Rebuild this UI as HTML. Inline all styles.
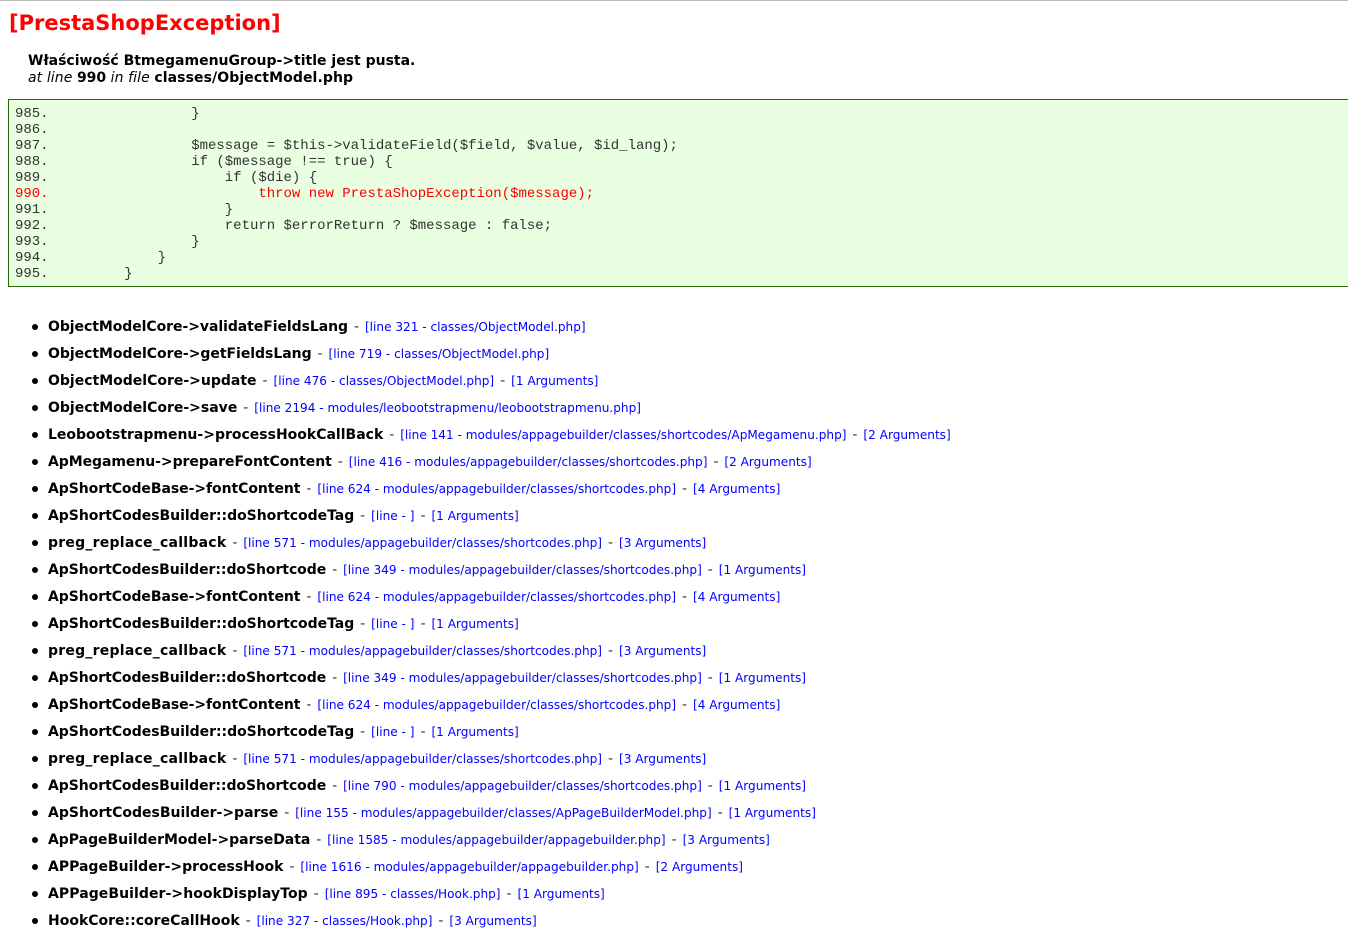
<!DOCTYPE html>
<html lang="pl"><head><meta charset="utf-8"><title>PrestaShopException</title>
<style>
html,body{margin:0;padding:0;background:#fff;overflow:hidden}
body{width:1348px;height:942px;position:relative;font-family:"DejaVu Sans","Liberation Sans",sans-serif;color:#000}
#top{position:absolute;left:0;top:0;width:1348px;height:1px;background:#bbb}
h2{position:absolute;left:9px;top:8px;margin:0;font-size:21px;line-height:30px;color:#f00;font-weight:bold;white-space:nowrap}
#msg{position:absolute;left:28px;top:53px;font-size:14px;line-height:17px;white-space:nowrap}
#msg i{letter-spacing:.1px}
#msg .f{letter-spacing:.1px}
#code{position:absolute;left:8px;top:99px;width:1345px;height:186px;border:1px solid #236B04;background:#EAFEE1;box-sizing:content-box}
#code pre{margin:6px 0 0 6px;font:14px/16px "Liberation Mono",monospace;color:#333;letter-spacing:-.01px}
#code .r{color:#f00}
ul{position:absolute;left:0;top:314px;margin:0;padding:0;list-style:none}
li{position:relative;height:27px;line-height:27px;padding-left:48px;white-space:nowrap;font-size:14px;word-spacing:1.5px;color:#333}
li:before{content:"";position:absolute;left:32px;top:10px;width:6px;height:6px;border-radius:50%;background:#000}
li b{font-size:14px;color:#000;word-spacing:0}
li b.s1{letter-spacing:-.06px}
li b.s2{letter-spacing:-.03px}
li b.p1{letter-spacing:.07px}
li b.p2{letter-spacing:.24px}
a{color:#00f;text-decoration:none;font-size:12.1px;word-spacing:0}
</style></head><body>
<div id="top"></div>
<h2>[PrestaShopException]</h2>
<div id="msg"><b>Właściwość BtmegamenuGroup-&gt;title jest pusta.</b><br><i>at line</i> <b>990</b> <i>in file</i> <b class="f">classes/ObjectModel.php</b></div>
<div id="code"><pre>985.                 }
986.
987.                 $message = $this-&gt;validateField($field, $value, $id_lang);
988.                 if ($message !== true) {
989.                     if ($die) {
<span class="r">990.                         throw new PrestaShopException($message);</span>
991.                     }
992.                     return $errorReturn ? $message : false;
993.                 }
994.             }
995.         }</pre></div>
<ul>
<li><b class="s1">ObjectModelCore-&gt;validateFieldsLang</b> - <a href="#">[line 321 - classes/ObjectModel.php]</a></li>
<li><b class="s2">ObjectModelCore-&gt;getFieldsLang</b> - <a href="#">[line 719 - classes/ObjectModel.php]</a></li>
<li><b>ObjectModelCore-&gt;update</b> - <a href="#">[line 476 - classes/ObjectModel.php]</a> - <a href="#">[1 Arguments]</a></li>
<li><b>ObjectModelCore-&gt;save</b> - <a href="#">[line 2194 - modules/leobootstrapmenu/leobootstrapmenu.php]</a></li>
<li><b>Leobootstrapmenu-&gt;processHookCallBack</b> - <a href="#">[line 141 - modules/appagebuilder/classes/shortcodes/ApMegamenu.php]</a> - <a href="#">[2 Arguments]</a></li>
<li><b class="s1">ApMegamenu-&gt;prepareFontContent</b> - <a href="#">[line 416 - modules/appagebuilder/classes/shortcodes.php]</a> - <a href="#">[2 Arguments]</a></li>
<li><b class="s1">ApShortCodeBase-&gt;fontContent</b> - <a href="#">[line 624 - modules/appagebuilder/classes/shortcodes.php]</a> - <a href="#">[4 Arguments]</a></li>
<li><b class="s2">ApShortCodesBuilder::doShortcodeTag</b> - <a href="#">[line - ]</a> - <a href="#">[1 Arguments]</a></li>
<li><b class="p2">preg_replace_callback</b> - <a href="#">[line 571 - modules/appagebuilder/classes/shortcodes.php]</a> - <a href="#">[3 Arguments]</a></li>
<li><b class="s1">ApShortCodesBuilder::doShortcode</b> - <a href="#">[line 349 - modules/appagebuilder/classes/shortcodes.php]</a> - <a href="#">[1 Arguments]</a></li>
<li><b class="s1">ApShortCodeBase-&gt;fontContent</b> - <a href="#">[line 624 - modules/appagebuilder/classes/shortcodes.php]</a> - <a href="#">[4 Arguments]</a></li>
<li><b class="s2">ApShortCodesBuilder::doShortcodeTag</b> - <a href="#">[line - ]</a> - <a href="#">[1 Arguments]</a></li>
<li><b class="p2">preg_replace_callback</b> - <a href="#">[line 571 - modules/appagebuilder/classes/shortcodes.php]</a> - <a href="#">[3 Arguments]</a></li>
<li><b class="s1">ApShortCodesBuilder::doShortcode</b> - <a href="#">[line 349 - modules/appagebuilder/classes/shortcodes.php]</a> - <a href="#">[1 Arguments]</a></li>
<li><b class="s1">ApShortCodeBase-&gt;fontContent</b> - <a href="#">[line 624 - modules/appagebuilder/classes/shortcodes.php]</a> - <a href="#">[4 Arguments]</a></li>
<li><b class="s2">ApShortCodesBuilder::doShortcodeTag</b> - <a href="#">[line - ]</a> - <a href="#">[1 Arguments]</a></li>
<li><b class="p2">preg_replace_callback</b> - <a href="#">[line 571 - modules/appagebuilder/classes/shortcodes.php]</a> - <a href="#">[3 Arguments]</a></li>
<li><b class="s1">ApShortCodesBuilder::doShortcode</b> - <a href="#">[line 790 - modules/appagebuilder/classes/shortcodes.php]</a> - <a href="#">[1 Arguments]</a></li>
<li><b>ApShortCodesBuilder-&gt;parse</b> - <a href="#">[line 155 - modules/appagebuilder/classes/ApPageBuilderModel.php]</a> - <a href="#">[1 Arguments]</a></li>
<li><b class="s2">ApPageBuilderModel-&gt;parseData</b> - <a href="#">[line 1585 - modules/appagebuilder/appagebuilder.php]</a> - <a href="#">[3 Arguments]</a></li>
<li><b>APPageBuilder-&gt;processHook</b> - <a href="#">[line 1616 - modules/appagebuilder/appagebuilder.php]</a> - <a href="#">[2 Arguments]</a></li>
<li><b class="p1">APPageBuilder-&gt;hookDisplayTop</b> - <a href="#">[line 895 - classes/Hook.php]</a> - <a href="#">[1 Arguments]</a></li>
<li><b>HookCore::coreCallHook</b> - <a href="#">[line 327 - classes/Hook.php]</a> - <a href="#">[3 Arguments]</a></li>
</ul>
</body></html>
